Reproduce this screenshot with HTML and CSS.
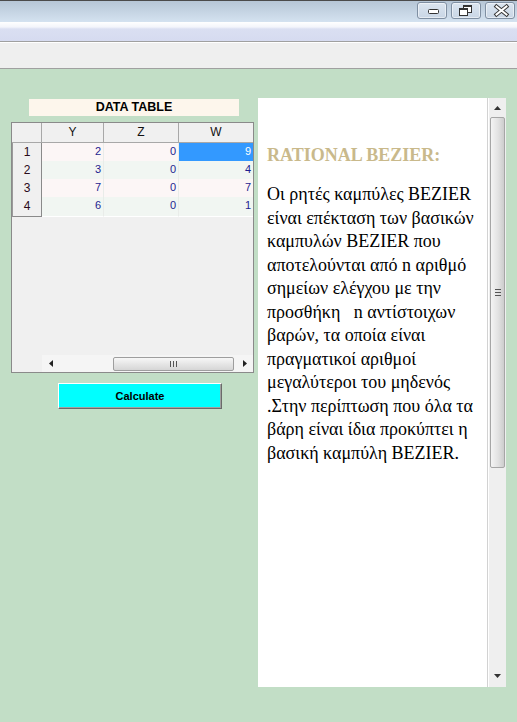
FILE: index.html
```html
<!DOCTYPE html>
<html>
<head>
<meta charset="utf-8">
<title>Rational Bezier</title>
<link rel="stylesheet" href="styles.css">
</head>
<body>
<div class="titlebar">
  <div class="cbtn">
    <svg width="28" height="15" viewBox="0 0 28 15"><rect x="10.5" y="6.5" width="10" height="4" rx="1" fill="#fff" stroke="#333"/></svg>
  </div>
  <div class="cbtn">
    <svg width="28" height="15" viewBox="0 0 28 15">
      <rect x="11.5" y="2.5" width="8" height="7" fill="#fff" stroke="#333"/>
      <line x1="11.5" y1="3.5" x2="19.5" y2="3.5" stroke="#333"/>
      <rect x="7.5" y="5.5" width="8" height="7" fill="#fff" stroke="#333"/>
      <line x1="7.5" y1="6.5" x2="15.5" y2="6.5" stroke="#333"/>
    </svg>
  </div>
  <div class="cbtn">
    <svg width="28" height="15" viewBox="0 0 28 15">
      <path d="M10.5 3.5 L20.5 11.5 M20.5 3.5 L10.5 11.5" stroke="#333" stroke-width="4" stroke-linecap="square"/>
      <path d="M10.5 3.5 L20.5 11.5 M20.5 3.5 L10.5 11.5" stroke="#fff" stroke-width="2" stroke-linecap="square"/>
    </svg>
  </div>
</div>
<div class="menubar"></div>
<div class="toolbar"></div>
<div class="main">
  <div class="left">
    <div class="label">DATA TABLE</div>
    <div class="grid">
      <div class="grow ghead">
        <div class="hcell corner"></div>
        <div class="hcell">Y</div>
        <div class="hcell">Z</div>
        <div class="hcell">W</div>
      </div>
      <div class="grow odd">
        <div class="rhead">1</div>
        <div class="dcell">2</div>
        <div class="dcell">0</div>
        <div class="dcell sel">9</div>
      </div>
      <div class="grow even">
        <div class="rhead">2</div>
        <div class="dcell">3</div>
        <div class="dcell">0</div>
        <div class="dcell">4</div>
      </div>
      <div class="grow odd">
        <div class="rhead">3</div>
        <div class="dcell">7</div>
        <div class="dcell">0</div>
        <div class="dcell">7</div>
      </div>
      <div class="grow even">
        <div class="rhead">4</div>
        <div class="dcell">6</div>
        <div class="dcell">0</div>
        <div class="dcell">1</div>
      </div>
      <div class="gempty"></div>
      <div class="hscroll">
        <div class="harrow"><svg width="4" height="7" viewBox="0 0 4 7"><path d="M4 0 L0 3.5 L4 7 Z" fill="#222"/></svg></div>
        <div class="htrack">
          <div class="hthumb"><span class="hgrip"></span></div>
        </div>
        <div class="harrow"><svg width="4" height="7" viewBox="0 0 4 7"><path d="M0 0 L4 3.5 L0 7 Z" fill="#222"/></svg></div>
      </div>
    </div>
    <button class="calc">Calculate</button>
  </div>
  <div class="textbox">
    <div class="text">
      <h3 class="heading">RATIONAL BEZIER:</h3>
      <p class="para">Οι ρητές καμπύλες BEZIER είναι επέκταση των βασικών καμπυλών BEZIER που αποτελούνται από n αριθμό σημείων ελέγχου με την προσθήκη &nbsp;&nbsp;n αντίστοιχων βαρών, τα οποία είναι πραγματικοί αριθμοί μεγαλύτεροι του μηδενός .Στην περίπτωση που όλα τα βάρη είναι ίδια προκύπτει η βασική καμπύλη BEZIER.</p>
    </div>
    <div class="vscroll">
      <div class="varrow up"><svg width="7" height="4" viewBox="0 0 7 4"><path d="M0 4 L3.5 0 L7 4 Z" fill="#333"/></svg></div>
      <div class="vthumb"><span class="vgrip"></span></div>
      <div class="vtrack"></div>
      <div class="varrow down"><svg width="7" height="4" viewBox="0 0 7 4"><path d="M0 0 L7 0 L3.5 4 Z" fill="#333"/></svg></div>
    </div>
  </div>
</div>
</body>
</html>
```

FILE: styles.css
```css
html, body {
  margin: 0;
  padding: 0;
}
body {
  width: 517px;
  height: 722px;
  overflow: hidden;
  font-family: "Liberation Sans", Arial, sans-serif;
  background: #c2dec6;
}
.titlebar {
  height: 21px;
  border-top: 1px solid #4b4b4b;
  background: linear-gradient(#b6c6d6, #d4e2f0);
  display: flex;
  justify-content: flex-end;
  align-items: flex-start;
  gap: 4px;
  padding-right: 2px;
}
.cbtn {
  margin-top: 1px;
  width: 28px;
  height: 15px;
  border: 1px solid #7f8fa2;
  border-radius: 3px;
  background: linear-gradient(#dbe5f0, #c9d6e5);
  box-shadow: inset 0 0 0 1px rgba(255,255,255,0.5);
}
.cbtn svg {
  display: block;
}
.menubar {
  height: 19px;
  background: linear-gradient(#ffffff 0, #f3f5fb 5px, #dadff2 7px, #d6dbf0 100%);
}
.toolbar {
  height: 26px;
  border-top: 1px solid #a0a0a0;
  border-bottom: 1px solid #a0a0a0;
  background: #efefef;
  box-shadow: inset 0 1px 0 #ffffff;
}
.main {
  height: 653px;
  box-sizing: border-box;
  padding: 29px 0 0 11px;
  display: flex;
  align-items: flex-start;
  gap: 4px;
}
.left {
  width: 243px;
  display: flex;
  flex-direction: column;
}
.label {
  margin: 1px 0 0 18px;
  width: 210px;
  height: 17px;
  background: #fdf6ec;
  font-weight: bold;
  font-size: 12.5px;
  line-height: 17px;
  text-align: center;
  color: #000;
}
.grid {
  margin-top: 6px;
  width: 243px;
  height: 251px;
  box-sizing: border-box;
  border: 1px solid #8a8a8a;
  background: #f0f0f0;
  display: flex;
  flex-direction: column;
  font-size: 11px;
}
.grow {
  display: grid;
  grid-template-columns: 30px 62px 75px 74px;
  height: 18px;
}
.ghead {
  height: 20px;
}
.hcell {
  box-sizing: border-box;
  border-right: 1px solid #a8a8a8;
  border-bottom: 1px solid #a8a8a8;
  background: #f0f0f0;
  text-align: center;
  font-size: 12px;
  line-height: 19px;
  color: #111;
}
.hcell:last-child {
  border-right: none;
}
.rhead {
  box-sizing: border-box;
  border-right: 1px solid #8a8a8a;
  border-bottom: 1px solid #8a8a8a;
  border-left: 1px solid #9a9a9a;
  background: #f0f0f0;
  text-align: center;
  font-size: 12px;
  line-height: 19px;
  color: #2a0a1a;
}
.dcell {
  box-sizing: border-box;
  border-right: 1px solid #e9ece9;
  border-bottom: 1px solid #ffffff;
  text-align: right;
  padding-right: 2px;
  line-height: 16px;
  color: #1e1e90;
}
.dcell:last-child {
  border-right: none;
}
.odd .dcell {
  background: #fcf6f6;
}
.even .dcell {
  background: #f1f6f2;
}
.odd .dcell.sel, .even .dcell.sel {
  background: #3399ff;
  color: #ffffff;
}
.gempty {
  flex: 1;
}
.hscroll {
  margin-left: 30px;
  height: 17px;
  display: flex;
  align-items: center;
  background: #f5f5f5;
}
.harrow {
  width: 17px;
  height: 17px;
  display: flex;
  align-items: center;
  justify-content: center;
}
.htrack {
  flex: 1;
  height: 17px;
  display: flex;
  align-items: center;
}
.hthumb {
  margin-left: 54px;
  width: 121px;
  height: 14px;
  box-sizing: border-box;
  border: 1px solid #9e9e9e;
  border-radius: 2px;
  background: linear-gradient(#f7f7f7, #e6e6e6 50%, #d6d6d6);
  display: flex;
  align-items: center;
  justify-content: center;
}
.hgrip {
  width: 7px;
  height: 6px;
  background: repeating-linear-gradient(to right, #555 0 1px, transparent 1px 3px);
}
.calc {
  margin: 10px 0 0 47px;
  width: 164px;
  height: 26px;
  padding: 0;
  border: 1px solid;
  border-color: #ffffff #6a6a6a #6a6a6a #ffffff;
  box-shadow: inset -1px -1px 0 #a0a0a0;
  background: #00ffff;
  font-family: "Liberation Sans", Arial, sans-serif;
  font-weight: bold;
  font-size: 11px;
  color: #000;
}
.textbox {
  width: 248px;
  height: 589px;
  margin-top: 0;
  background: #ffffff;
  display: flex;
}
.text {
  flex: 1;
  padding: 46px 0 0 9px;
  font-family: "Liberation Serif", "Times New Roman", serif;
  font-size: 18px;
  line-height: 23.5px;
  color: #000;
}
.heading {
  margin: 0 0 15.5px 0;
  font-size: 18px;
  font-weight: bold;
  color: #c9b98b;
  line-height: 23.5px;
}
.para {
  margin: 0;
}
.vscroll {
  width: 19px;
  box-sizing: border-box;
  border-left: 1px solid #d2d2d2;
  padding: 0 1px 0 1px;
  background: linear-gradient(to right, #ffffff 0 1px, #efefef 1px);
  display: flex;
  flex-direction: column;
}
.varrow {
  height: 19px;
  display: flex;
  align-items: center;
  justify-content: center;
}
.vthumb {
  height: 351px;
  margin-left: 1px;
  box-sizing: border-box;
  border: 1px solid #a6a6a6;
  border-radius: 2px;
  background: linear-gradient(to right, #f4f4f4, #e2e2e2 55%, #cdcdcd);
  display: flex;
  align-items: center;
  justify-content: center;
}
.vgrip {
  width: 6px;
  height: 7px;
  background: repeating-linear-gradient(#555 0 1px, transparent 1px 3px);
}
.vtrack {
  flex: 1;
}
.down {
  height: 19px;
  margin-bottom: 2px;
}
```
